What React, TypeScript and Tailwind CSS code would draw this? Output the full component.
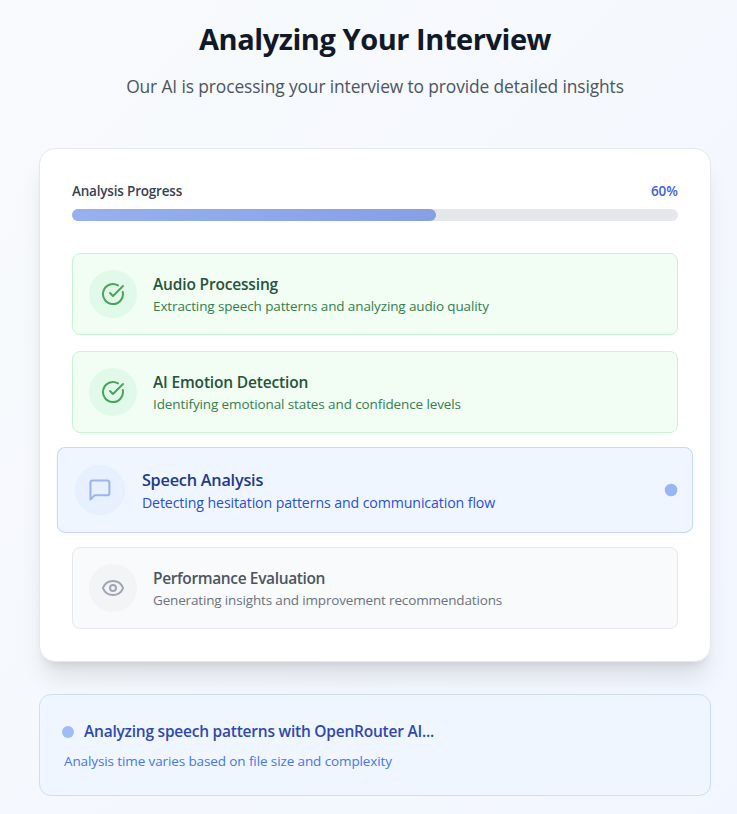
import type { ReactNode } from "react";
import { CircleCheckBig, Eye } from "lucide-react";

function MessageSquare({ className }: { className?: string }) {
  return (
    <svg
      viewBox="0 0 24 24"
      fill="none"
      stroke="currentColor"
      strokeWidth={2}
      strokeLinecap="round"
      strokeLinejoin="round"
      className={className}
    >
      <path d="M21 15a2 2 0 0 1-2 2H7l-4 4V5a2 2 0 0 1 2-2h14a2 2 0 0 1 2 2z" />
    </svg>
  );
}

interface StepProps {
  icon: ReactNode;
  title: string;
  description: string;
  box: string;
  circle: string;
  titleClass: string;
  descriptionClass: string;
  active?: boolean;
}

function Step({ icon, title, description, box, circle, titleClass, descriptionClass, active }: StepProps) {
  return (
    <div className={`flex items-center rounded-lg border p-4 ${box}`}>
      <div className={`flex h-12 w-12 shrink-0 items-center justify-center rounded-full ${circle}`}>{icon}</div>
      <div className="ml-4 flex-1 whitespace-nowrap">
        <h3 className={`text-[15.5px] font-semibold ${titleClass}`}>{title}</h3>
        <p className={`text-[13.5px] leading-5 ${descriptionClass}`}>{description}</p>
      </div>
      {active && <div className="h-2 w-2 scale-150 rounded-full bg-[#98b6f7]" />}
    </div>
  );
}

export default function App() {
  return (
    <div className="h-[814px] w-[737px] overflow-hidden bg-gradient-to-br from-[#f8fafc] to-[#f2f6ff] pt-5 pl-[39px] font-['Open_Sans','Noto_Sans',sans-serif]">
      <div className="w-[672px]">
        <header className="mb-12 text-center whitespace-nowrap">
          <h1 className="mb-4 pt-0.5 text-[29px] leading-[34px] font-bold tracking-[-0.44px] text-[#111827]">
            Analyzing Your Interview
          </h1>
          <p className="text-[17.4px] leading-7 tracking-[-0.12px] text-[#4b5563]">
            Our AI is processing your interview to provide detailed insights
          </p>
        </header>

        <section className="rounded-2xl border border-[#e5e7eb] bg-white p-8 shadow-xl">
          <div className="mb-8">
            <div className="mb-2 flex items-center justify-between text-[13.5px] leading-5 font-semibold">
              <span className="tracking-[-0.19px] text-[#374151]">Analysis Progress</span>
              <span className="text-[#3f5fe0]">60%</span>
            </div>
            <div className="h-3 w-full rounded-full bg-[#e5e7eb]">
              <div className="h-3 w-3/5 rounded-full bg-gradient-to-r from-[#96b1ed] to-[#879fe5]" />
            </div>
          </div>

          <div className="space-y-4">
            <Step
              icon={<CircleCheckBig className="h-6 w-6 text-[#4ba35e]" />}
              title="Audio Processing"
              description="Extracting speech patterns and analyzing audio quality"
              box="border-[#c6f4d3] bg-[#f2fdf4]"
              circle="bg-[#e1f9e8]"
              titleClass="pt-px leading-[23px] tracking-[-0.17px] text-[#24543a]"
              descriptionClass="tracking-[-0.12px] text-[#35804e]"
            />
            <Step
              icon={<CircleCheckBig className="h-6 w-6 text-[#4ba35e]" />}
              title="AI Emotion Detection"
              description="Identifying emotional states and confidence levels"
              box="border-[#c6f4d3] bg-[#f2fdf4]"
              circle="bg-[#e1f9e8]"
              titleClass="pt-px leading-[23px] tracking-[-0.17px] text-[#24543a]"
              descriptionClass="tracking-[-0.11px] text-[#35804e]"
            />
            <Step
              active
              icon={<MessageSquare className="h-6 w-6 text-[#9cb4f3]" />}
              title="Speech Analysis"
              description="Detecting hesitation patterns and communication flow"
              box="scale-105 border-[#c3d9fd] bg-[#eff6ff]"
              circle="bg-[#e6f0fe]"
              titleClass="leading-6 tracking-[-0.22px] text-[#1e3a8a]"
              descriptionClass="tracking-[-0.11px] text-[#2a50d8]"
            />
            <Step
              icon={<Eye className="h-6 w-6 text-[#a0a5b3]" />}
              title="Performance Evaluation"
              description="Generating insights and improvement recommendations"
              box="border-[#e5e7eb] bg-[#f9fafb]"
              circle="bg-[#f3f4f6]"
              titleClass="pt-px leading-[23px] tracking-[-0.36px] text-[#4b5563]"
              descriptionClass="tracking-[-0.16px] text-[#6b7280]"
            />
          </div>
        </section>

        <section className="mt-8 rounded-xl border border-[#cbdefb] bg-[#eff6ff] p-6 whitespace-nowrap">
          <div className="flex items-center">
            <div className="mt-px h-2 w-2 scale-150 rounded-full bg-[#a0bcf7]" />
            <span className="ml-3 pt-px text-[15.5px] leading-[23px] font-semibold tracking-[-0.23px] text-[#3148b0]">
              Analyzing speech patterns with OpenRouter AI...
            </span>
          </div>
          <p className="mt-2 text-[13.5px] leading-5 tracking-[-0.11px] text-[#4a75ec]">
            Analysis time varies based on file size and complexity
          </p>
        </section>
      </div>
    </div>
  );
}
